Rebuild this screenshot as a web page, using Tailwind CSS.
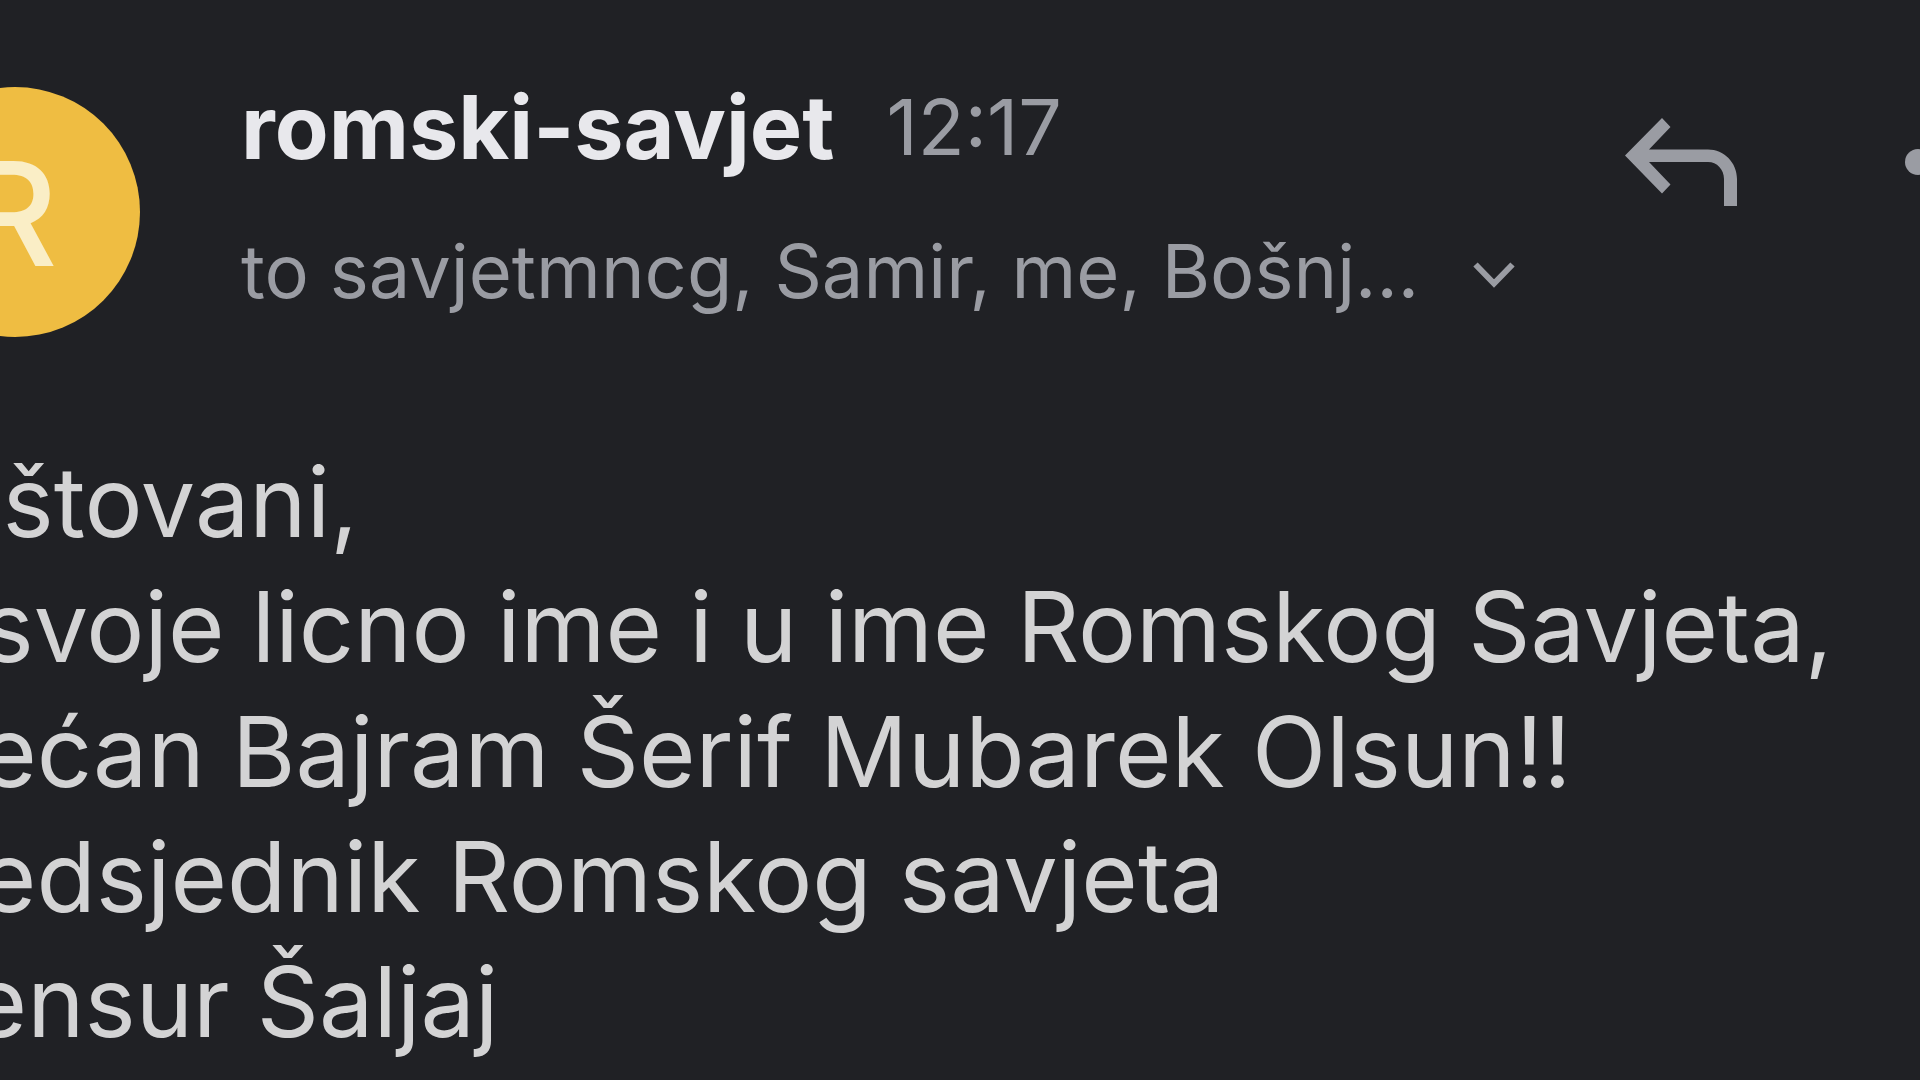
<!DOCTYPE html>
<html lang="bs">
<head>
    <meta charset="UTF-8">
    <meta name="viewport" content="width=device-width, initial-scale=1.0">
    <title>romski-savjet</title>
    <script src="https://cdn.jsdelivr.net/npm/@tailwindcss/browser@4"></script>
</head>
<body class="min-h-screen overflow-hidden bg-[#202125] font-['Inter',sans-serif] text-[#d3d3d4]">
<article>
    <header class="flex items-start pt-[77px] text-[#9a9ca3]">
        <!-- Avatar -->
        <div class="-ml-[110px] mt-[10px] flex size-[250px] shrink-0 items-center justify-center rounded-full bg-[#efbd42] pt-1 pr-2 text-[144px] leading-none font-medium text-[#faeec6]">R</div>

        <!-- Sender and recipients -->
        <div class="ml-[101px] whitespace-nowrap">
            <div class="flex items-center gap-[52px]">
                <h1 class="text-[88px] leading-[100px] font-bold text-[#e8e8ec]">romski-savjet</h1>
                <time datetime="12:17" class="text-[77px] leading-[100px]">12:17</time>
            </div>
            <button type="button" class="mt-[49px] flex items-center gap-[54px] text-[74px] leading-[90px]">
                <span>to savjetmncg, Samir, me, Bošnj...</span>
                <svg class="mt-2 h-[26px] w-[42px]" viewBox="0 0 42 26" fill="none" stroke="currentColor" stroke-width="6" aria-hidden="true">
                    <path d="M2.5 2.5L21 21.5L39.5 2.5"/>
                </svg>
            </button>
        </div>

        <!-- Actions -->
        <div class="-mr-[97px] mt-[41px] ml-auto flex shrink-0 items-center gap-[168px]">
            <button type="button" aria-label="Reply">
                <svg class="h-[88px] w-[112px]" viewBox="0 0 112 88" fill="currentColor" aria-hidden="true">
                    <path d="M0 37.5L37 0L45.5 9L24 31.5H83C99 31.5 112 44.5 112 61V88H99V61C99 51.5 92 44 83 44H24L45.5 66.5L37 75.5Z"/>
                </svg>
            </button>
            <button type="button" aria-label="More">
                <svg class="h-[26px] w-[112px]" viewBox="0 0 112 26" fill="currentColor" aria-hidden="true">
                    <circle cx="13" cy="13" r="13"/>
                    <circle cx="56" cy="13" r="13"/>
                    <circle cx="99" cy="13" r="13"/>
                </svg>
            </button>
        </div>
    </header>

    <!-- Message -->
    <div class="-ml-[117px] mt-[102px] text-[97px] leading-[125px] whitespace-nowrap">
        <p>Poštovani,</p>
        <p>U svoje licno ime i u ime Romskog Savjeta,</p>
        <p>Srećan Bajram Šerif Mubarek Olsun!!</p>
        <p>Predsjednik Romskog savjeta</p>
        <p>Mensur Šaljaj</p>
    </div>
</article>
</body>
</html>
